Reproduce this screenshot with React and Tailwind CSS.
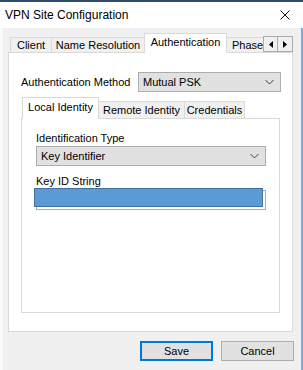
import React from "react";

function Chevron() {
  return (
    <svg width="9" height="6" viewBox="0 0 9 6" className="shrink-0">
      <polyline points="0.5,1 4.5,5 8.5,1" fill="none" stroke="#404040" strokeWidth="1" />
    </svg>
  );
}

function Select({ label, className }) {
  return (
    <div className={`h-[20px] bg-[#e1e1e1] border border-[#adadad] flex items-center justify-between pl-[4px] pr-[6px] ${className}`}>
      <span className="leading-[13px]">{label}</span>
      <Chevron />
    </div>
  );
}

export default function App() {
  return (
    <div className="w-[303px] h-[370px] bg-[#f0f0f0] flex flex-col overflow-hidden font-['Liberation_Sans',Arial,sans-serif] text-[11px] text-black">
      <div className="h-[2px] bg-[#2e4a6e]" />
      <div className="h-[26px] bg-white flex items-center justify-between pl-[5px] pr-[13px]">
        <span className="text-[12px] leading-[14px]">VPN Site Configuration</span>
        <svg width="10" height="10" viewBox="0 0 10 10">
          <line x1="0.5" y1="0.5" x2="9.5" y2="9.5" stroke="#111" strokeWidth="1" />
          <line x1="9.5" y1="0.5" x2="0.5" y2="9.5" stroke="#111" strokeWidth="1" />
        </svg>
      </div>
      <div className="flex-1 flex flex-col border-l-[3px] border-l-[#f9f9f9] border-r-[2px] border-r-[#7ea9d9] pl-[5px] pr-[8px] pt-[5px]">
        {/* outer tabs */}
        <div className="flex items-end h-[20px] -mb-px pl-[2px] relative z-10">
          <div className="h-[16px] w-[41px] bg-[#f0f0f0] border-l border-t border-b border-[#d9d9d9] flex items-center justify-center leading-[13px]">Client</div>
          <div className="h-[16px] w-[93px] bg-[#f0f0f0] border-l border-t border-b border-[#d9d9d9] flex items-center justify-center leading-[13px]">Name Resolution</div>
          <div className="h-[20px] w-[83px] bg-white border-l border-t border-r border-[#d9d9d9] flex items-center justify-center leading-[13px] pb-[2px]">Authentication</div>
          <div className="h-[16px] w-[36px] bg-[#f0f0f0] border-t border-b border-[#d9d9d9] flex items-center pl-[5px] whitespace-nowrap leading-[13px]">Phase</div>
          <div className="h-[17px] flex self-start mt-[3px]">
            <div className="w-[15px] h-[16px] bg-[#f0f0f0] border border-[#adadad] flex items-center justify-center">
              <svg width="4" height="7" viewBox="0 0 4 7"><polygon points="4,0 4,7 0,3.5" fill="#000" /></svg>
            </div>
            <div className="w-[15px] h-[16px] bg-[#f0f0f0] border-y border-r border-[#adadad] flex items-center justify-center">
              <svg width="4" height="7" viewBox="0 0 4 7"><polygon points="0,0 0,7 4,3.5" fill="#000" /></svg>
            </div>
          </div>
        </div>
        {/* outer page */}
        <div className="h-[280px] bg-white border border-[#d9d9d9] flex flex-col pl-[12px] pr-[11px] pt-[19px]">
          <div className="flex items-center justify-between">
            <span className="leading-[13px]">Authentication Method</span>
            <Select label="Mutual PSK" className="w-[143px]" />
          </div>
          <div className="mr-px mt-[5px] flex flex-col">
            {/* inner tabs */}
            <div className="flex items-end h-[22px] -mb-px pl-[1px] relative z-10">
              <div className="h-[22px] w-[77px] bg-white border-l border-t border-r border-[#d9d9d9] flex items-center justify-center leading-[13px] pb-[2px]">Local Identity</div>
              <div className="h-[18px] w-[85px] bg-[#f0f0f0] border-t border-b border-[#d9d9d9] flex items-center justify-center leading-[13px]">Remote Identity</div>
              <div className="h-[18px] w-[61px] bg-[#f0f0f0] border-l border-t border-r border-b border-[#d9d9d9] flex items-center justify-center leading-[13px]">Credentials</div>
            </div>
            <div className="h-[195px] bg-white border border-[#d9d9d9] flex flex-col pl-[14px] pr-[13px] pt-[13px]">
              <span className="leading-[13px] h-[13px]">Identification Type</span>
              <Select label="Key Identifier" className="mt-px w-[230px]" />
              <span className="leading-[13px] h-[13px] mt-[9px]">Key ID String</span>
              <div className="relative mt-[2px] w-[230px] h-[20px] bg-white border border-[#adadad]">
                <div className="absolute -left-[3px] -top-[3px] w-[229px] h-[19px] bg-[#5b9bd5] border border-[#41719c]" />
              </div>
            </div>
          </div>
        </div>
        {/* buttons */}
        <div className="flex justify-end gap-[8px] mt-[9px] -mr-px">
          <div className="w-[73px] h-[20px] bg-[#e1e1e1] border-2 border-[#0078d7] flex items-center justify-center leading-[13px]">Save</div>
          <div className="w-[73px] h-[20px] bg-[#e1e1e1] border border-[#adadad] flex items-center justify-center leading-[13px]">Cancel</div>
        </div>
      </div>
    </div>
  );
}
